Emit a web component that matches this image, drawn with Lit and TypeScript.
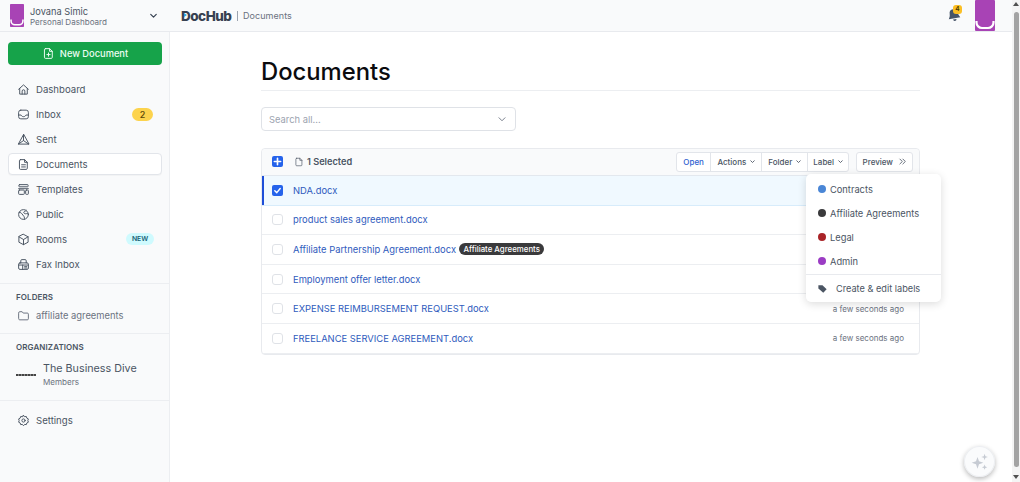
import { LitElement, html, css, svg } from "lit";
import { customElement } from "lit/decorators.js";

const ic = (p: unknown, size = 14, sw = 1.8) => html`<svg class="ic" width=${size} height=${size} viewBox="0 0 24 24" fill="none" stroke="currentColor" stroke-width=${sw} stroke-linecap="round" stroke-linejoin="round">${p}</svg>`;

const icons = {
  home: svg`<path d="M3 11.500 12 3.500l9 8"/><path d="M5 10v10.500h14V10"/><path d="M9.500 20.500V15a2.500 2.500 0 0 1 5 0v5.500"/>`,
  inbox: svg`<rect x="3" y="4" width="18" height="16" rx="4"/><path d="M3 13h4.500c1 2 2.500 3 4.500 3s3.500-1 4.500-3H21"/>`,
  sent: svg`<path d="M12 3 2.500 20.500h19z"/><path d="M12 3v11M2.500 20.500 12 14l9.500 6.500"/>`,
  doc: svg`<path d="M6.500 3h7.500l5 5v11a2 2 0 0 1-2 2H6.500a2 2 0 0 1-2-2V5a2 2 0 0 1 2-2z"/><path d="M14 3v5h5"/><path d="M8.500 12.500h7M8.500 16.500h7"/>`,
  templates: svg`<rect x="3.500" y="3" width="17" height="4" rx="1"/><path d="M3 10.500h18"/><rect x="3" y="13" width="10.500" height="8" rx="1.500"/><rect x="16" y="13" width="5" height="8" rx="1.500"/>`,
  globe: svg`<circle cx="12" cy="12" r="9"/><path d="M4 8c3 0 4 1.500 5.500 3s1 3 2.500 3.500 2 3 1.500 6.500"/><path d="M17 4.500c-1.500 2-4 1.500-4.500 3.500s3 3 4.500 2.500 3-.5 4 .5"/>`,
  box: svg`<path d="M12 2.500 20.500 7v10L12 21.500 3.500 17V7z"/><path d="M3.500 7 12 12l8.500-5M12 12v9.500"/>`,
  fax: svg`<path d="M7 9V5a2 2 0 0 1 2-2h6a2 2 0 0 1 2 2v4"/><rect x="3" y="9" width="18" height="12" rx="2.500"/><path d="M3 13h18M14 16h4M14 18.500h4M10.500 13v8"/>`,
  folder: svg`<path d="M3 7a2 2 0 0 1 2-2h4.500l2 2.500H19a2 2 0 0 1 2 2V18a2 2 0 0 1-2 2H5a2 2 0 0 1-2-2z"/>`,
  gear: svg`<circle cx="12" cy="12" r="3"/><path d="M12 2.500l2 2.500 3.200-.4.9 3 2.900 1.500-1 3 1 3-2.900 1.500-.9 3-3.200-.4-2 2.500-2-2.500-3.200.4-.9-3L3 15.100l1-3-1-3 2.900-1.500.9-3 3.200.4z"/>`,
  newDoc: svg`<path d="M6.500 3h7.500l5 5v11a2 2 0 0 1-2 2H6.500a2 2 0 0 1-2-2V5a2 2 0 0 1 2-2z"/><path d="M14 3v5h5"/><path d="M12 11v6M9 14h6"/>`,
  plainDoc: svg`<path d="M6.500 3h7.500l5 5v11a2 2 0 0 1-2 2H6.500a2 2 0 0 1-2-2V5a2 2 0 0 1 2-2z"/><path d="M14 3v5h5"/>`,
  chev: svg`<path d="M6 9.500l6 6 6-6"/>`,
  dbl: svg`<path d="M5 5.500l6.500 6.500L5 18.500M13 5.500l6.500 6.500-6.500 6.500"/>`,
};

const Avatar = (w: number, h: number) => html`<svg width=${w} height=${h} viewBox="0 0 20 31" preserveAspectRatio="none" class="avatar">
  <rect width="20" height="31" rx="1" fill="#a843b5"/>
  <path d="M1.500 21v1.500a5.500 5.500 0 0 0 5.500 5.500h6a5.500 5.500 0 0 0 5.500-5.500V21" fill="none" stroke="#fff" stroke-width="2.200"/>
</svg>`;

@customElement("app-root")
export class AppRoot extends LitElement {
  static styles = css`
    :host { display: block; width: 1020px; height: 482px; overflow: hidden; font-family: Inter, "Liberation Sans", sans-serif; color: #4b5563; background: #fff; position: relative; }
    * { box-sizing: border-box; }
    .ic { flex: none; display: block; }
    .page { display: flex; height: 482px; }
    .app { flex: 1; display: flex; flex-direction: column; min-width: 0; }
    .scroll { width: 8px; background: #f4f4f4; flex: none; display: flex; flex-direction: column; align-items: center; justify-content: space-between; padding: 2px 0 3px; }
    .arrow-up { width: 0; height: 0; border: 3.500px solid transparent; border-top: 0; border-bottom: 4px solid #505050; }
    .arrow-down { width: 0; height: 0; border: 3.500px solid transparent; border-bottom: 0; border-top: 4px solid #505050; }
    .thumb { flex: 1; width: 5px; margin: 4px 0 6px; background: #a3a3a3; border-radius: 3px; max-height: 455px; }
    header { height: 32px; flex: none; display: flex; align-items: stretch; background: #f9fafb; border-bottom: 1px solid #e8eaee; }
    .user { width: 170px; flex: none; display: flex; align-items: center; padding: 0 11px 0 10px; gap: 6px; }
    .avatar { display: block; flex: none; }
    .user .who { flex: 1; padding-top: 1px; }
    .who b { display: block; font-weight: 400; font-size: 9.250px; color: #4b5563; line-height: 11px; }
    .who span { display: block; font-size: 8.050px; color: #6b7280; line-height: 10px; }
    .user .ic { color: #374151; }
    .brand { flex: 1; display: flex; align-items: center; padding-left: 11px; gap: 5px; }
    .logo { font-weight: 800; font-size: 13.500px; color: #374151; letter-spacing: -0.5px; position: relative; width: 51px; }
    .logo i { position: absolute; left: 3px; top: 5px; width: 0; height: 0; border: 2.500px solid transparent; border-left: 3.500px solid #2aa6e0; border-right: 0; }
    .sep { width: 1px; height: 10px; background: #9ca3af; }
    .crumb { font-size: 9px; color: #6b7280; letter-spacing: 0.05px; }
    .right { display: flex; align-items: flex-start; padding-right: 17px; }
    .bell { position: relative; width: 14px; height: 14px; margin: 8px 14px 0 0; color: #475569; }
    .bell svg { display: block; transform: rotate(-10deg); }
    .bell b { position: absolute; left: 6px; top: -3px; width: 9px; height: 9px; border-radius: 3px; background: #fbbf24; color: #4b3b00; font-size: 6.500px; font-weight: 600; text-align: center; line-height: 9px; }
    .body { flex: 1; display: flex; min-height: 0; }
    aside { width: 170px; flex: none; background: #f9fafb; border-right: 1px solid #eceef1; padding-top: 10px; display: flex; flex-direction: column; }
    .new { margin: 0 7px 0 8px; height: 23px; border-radius: 4px; background: #16a34a; color: #ecfdf3; display: flex; align-items: center; justify-content: center; gap: 5px; font-size: 9.300px; font-weight: 500; }
    nav { padding: 13px 7px 0 8px; display: flex; flex-direction: column; gap: 3px; }
    .item { height: 22px; display: flex; align-items: center; padding-left: 8px; gap: 6px; font-size: 9.600px; color: #4b5563; border: 1px solid transparent; border-radius: 4px; }
    .item .ic { color: #4b5563; }
    .item.active { background: #fff; border-color: #e2e5ea; box-shadow: 0 1px 1px rgba(0,0,0,.03); }
    .item span.t { flex: 1; }
    .count { width: 21px; height: 13px; border-radius: 7px; background: #fcd34d; color: #5c4708; font-size: 9px; font-weight: 500; text-align: center; line-height: 13px; margin-right: 8px; }
    .tagnew { width: 28px; height: 12px; border-radius: 6px; background: #cffafe; color: #155e75; font-size: 6.800px; font-weight: 600; text-align: center; line-height: 12px; margin-right: 7px; }
    .sect { border-top: 1px solid #eceef1; padding: 0 16px; }
    .sect h4 { margin: 0; font-size: 8px; font-weight: 600; color: #4b5563; letter-spacing: .1px; line-height: 10px; }
    .folders { margin-top: 8px; padding-top: 8px; height: 50px; }
    .frow { display: flex; align-items: center; gap: 6px; margin-top: 7px; padding-left: 1px; font-size: 9.400px; color: #6b7280; }
    .orgs { padding-top: 8px; height: 67px; }
    .org { display: flex; align-items: center; gap: 7px; margin-top: 10px; }
    .orglogo { width: 20px; height: 2px; background: repeating-linear-gradient(90deg,#444 0 2px,#888 2px 3px); flex: none; }
    .org b { display: block; font-weight: 400; font-size: 10.750px; color: #4b5563; line-height: 14px; }
    .org span { display: block; font-size: 8.100px; color: #6b7280; line-height: 11px; margin-top: .5px; }
    .setting { border-top: 1px solid #eceef1; padding: 8px 7px 0 8px; }
    main { flex: 1; padding: 0 92px 0 91px; min-width: 0; position: relative; }
    h1 { margin: 0; padding-top: 25px; height: 59px; font-size: 23.800px; font-weight: 500; color: #0b0b0f; line-height: 30px; border-bottom: 1px solid #eceef1; }
    .search { margin-top: 16px; width: 255px; height: 24px; border: 1px solid #dfe2e7; border-radius: 4px; display: flex; align-items: center; justify-content: space-between; padding: 0 7px; font-size: 9.400px; color: #9ca3af; }
    .search .ic { color: #6b7280; }
    .table { margin-top: 17px; border: 1px solid #e8eaee; border-radius: 4px; position: relative; }
    .tool { height: 27px; display: flex; align-items: center; background: #f9fafb; padding: 0 6px 1px 10px; border-radius: 4px 4px 0 0; border-bottom: 1px solid #e3e8ee; }
    .box { width: 11px; height: 11px; border-radius: 2px; background: #2563eb; flex: none; display: flex; align-items: center; justify-content: center; }
    .empty { background: #fff; border: 1px solid #dfe2e7; border-radius: 3px; }
    .sel { display: flex; align-items: center; gap: 2px; margin-left: 11px; font-size: 9.200px; font-weight: 600; color: #4b5563; flex: 1; }
    .sel .ic { margin-right: 1px; }
    .group { display: flex; height: 20px; background: #fff; border: 1px solid #e2e5ea; border-radius: 3px; }
    .btn { display: flex; align-items: center; gap: 3px; padding: 0 4.500px 0 6.500px; font-size: 8px; font-weight: 500; color: #4b5563; border-left: 1px solid #e2e5ea; }
    .btn:first-child { border-left: 0; }
    .btn.open { color: #2f5fd0; padding: 0 6px; }
    .btn.lbl { padding: 0 3.500px 0 5.500px; }
    .group.preview { margin-left: 7px; }
    .group.preview .btn { padding: 0 5px 0 6px; gap: 5px; }
    .row { height: 29.600px; display: flex; align-items: center; padding-left: 10px; border-bottom: 1px solid #eceef1; font-size: 9.400px; color: #2f5bbd; }
    .row:last-child { border-bottom: 0; }
    .row.on { background: #f0f9ff; box-shadow: inset 2px 0 0 #1d4ed8; border-bottom-color: #d7ecfb; }
    .row .name { margin-left: 10px; }
    .row .when { margin-left: auto; margin-right: 15px; font-size: 8px; color: #6b7280; }
    .pill { margin-left: 3px; height: 12px; border-radius: 6px; background: #3a3a3c; color: #fff; font-size: 7.850px; font-weight: 500; padding: 0 4.500px; line-height: 12px; }
    .menu { position: absolute; left: 544px; top: 25px; width: 135px; height: 128px; background: #fff; border-radius: 5px; box-shadow: 0 2px 8px rgba(0,0,0,.14); padding-top: 3px; color: #4b5563; }
    .mi { height: 24px; display: flex; align-items: center; gap: 4px; padding-left: 12px; font-size: 9.300px; }
    .dot { width: 8px; height: 8px; border-radius: 50%; flex: none; }
    .mdiv { border-top: 1px solid #e8eaee; margin-top: 1px; padding-top: 1px; }
    .mi.create { gap: 9px; font-size: 9.200px; }
    .fab { position: absolute; right: 17px; bottom: 5px; width: 31px; height: 31px; border-radius: 50%; background: #fafbfc; box-shadow: 0 2px 5px rgba(0,0,0,.28), inset 0 0 0 1px #eceef1; display: flex; align-items: center; justify-content: center; }
  `;

  render() {
    const nav: [string, unknown, unknown?, boolean?][] = [
      ["Dashboard", icons.home],
      ["Inbox", icons.inbox, html`<span class="count">2</span>`],
      ["Sent", icons.sent],
      ["Documents", icons.doc, null, true],
      ["Templates", icons.templates],
      ["Public", icons.globe],
      ["Rooms", icons.box, html`<span class="tagnew">NEW</span>`],
      ["Fax Inbox", icons.fax],
    ];
    const rows: [string, string, unknown?][] = [
      ["NDA.docx", ""],
      ["product sales agreement.docx", ""],
      ["Affiliate Partnership Agreement.docx", "", html`<span class="pill">Affiliate Agreements</span>`],
      ["Employment offer letter.docx", ""],
      ["EXPENSE REIMBURSEMENT REQUEST.docx", "a few seconds ago"],
      ["FREELANCE SERVICE AGREEMENT.docx", "a few seconds ago"],
    ];
    const labels: [string, string][] = [["Contracts", "#4a86d6"], ["Affiliate Agreements", "#3a3a3c"], ["Legal", "#a92428"], ["Admin", "#9b3cc4"]];
    return html`
      <div class="page">
        <div class="app">
          <header>
            <div class="user">
              ${Avatar(14, 23)}
              <div class="who"><b>Jovana Simic</b><span>Personal Dashboard</span></div>
              ${ic(icons.chev, 11, 2.6)}
            </div>
            <div class="brand">
              <span class="logo">DocHub<i></i></span>
              <span class="sep"></span>
              <span class="crumb">Documents</span>
            </div>
            <div class="right">
              <div class="bell">
                <svg width="14" height="14" viewBox="0 0 24 24" fill="currentColor"><path d="M12 2a7 7 0 0 0-7 7c0 5-2.500 7-3 8.500h20c-.5-1.500-3-3.500-3-8.500a7 7 0 0 0-7-7z"/><path d="M9 19.500a3 3 0 0 0 6 0z"/></svg>
                <b>4</b>
              </div>
              ${Avatar(20, 31)}
            </div>
          </header>
          <div class="body">
            <aside>
              <div class="new">${ic(icons.newDoc, 13, 1.8)}<span>New Document</span></div>
              <nav>
                ${nav.map(([t, i, extra, active]) => html`
                  <div class="item ${active ? "active" : ""}">${ic(i, 13)}<span class="t">${t}</span>${extra ?? ""}</div>`)}
              </nav>
              <div class="sect folders">
                <h4>FOLDERS</h4>
                <div class="frow">${ic(icons.folder, 13)}<span>affiliate agreements</span></div>
              </div>
              <div class="sect orgs">
                <h4>ORGANIZATIONS</h4>
                <div class="org"><div class="orglogo"></div><div><b>The Business Dive</b><span>Members</span></div></div>
              </div>
              <div class="setting"><div class="item">${ic(icons.gear, 13)}<span class="t">Settings</span></div></div>
            </aside>
            <main>
              <h1>Documents</h1>
              <div class="search"><span>Search all...</span>${ic(icons.chev, 12, 1.8)}</div>
              <div class="table">
                <div class="tool">
                  <span class="box"><svg width="9" height="9" viewBox="0 0 10 10" stroke="#fff" stroke-width="1.800" stroke-linecap="round"><path d="M5 1.500v7M1.500 5h7"/></svg></span>
                  <span class="sel">${ic(icons.plainDoc, 10, 1.6)}1 Selected</span>
                  <div class="group">
                    <span class="btn open">Open</span>
                    <span class="btn">Actions ${ic(icons.chev, 7, 3)}</span>
                    <span class="btn">Folder ${ic(icons.chev, 7, 3)}</span>
                    <span class="btn lbl">Label ${ic(icons.chev, 7, 3)}</span>
                  </div>
                  <div class="group preview"><span class="btn">Preview ${ic(icons.dbl, 9, 2.2)}</span></div>
                </div>
                ${rows.map(([n, w, extra], idx) => html`
                  <div class="row ${idx === 0 ? "on" : ""}">
                    ${idx === 0
                      ? html`<span class="box"><svg width="9" height="9" viewBox="0 0 10 10" fill="none" stroke="#fff" stroke-width="1.600" stroke-linecap="round" stroke-linejoin="round"><path d="M2 5.200 4.200 7.400 8 2.800"/></svg></span>`
                      : html`<span class="box empty"></span>`}
                    <span class="name">${n}</span>${extra ?? ""}
                    ${w ? html`<span class="when">${w}</span>` : ""}
                  </div>`)}
                <div class="menu">
                  ${labels.map(([l, c]) => html`<div class="mi"><span class="dot" style="background:${c}"></span>${l}</div>`)}
                  <div class="mdiv">
                    <div class="mi create">
                      <svg width="9" height="9" viewBox="0 0 24 24" fill="#4b5563" class="ic"><path d="M1 3h11l11 11-9 9L1 12z"/></svg>
                      Create &amp; edit labels
                    </div>
                  </div>
                </div>
              </div>
              <div class="fab">
                <svg width="20" height="20" viewBox="0 0 24 24" fill="#c6cbd3"><path d="M9 6l1.800 5.200L16 13l-5.200 1.800L9 20l-1.800-5.200L2 13l5.200-1.800z"/><path d="M17.500 2l1 3 3 1-3 1-1 3-1-3-3-1 3-1z"/><path d="M17.500 15l.9 2.300 2.300.9-2.300.9-.9 2.300-.9-2.300-2.300-.9 2.300-.9z"/></svg>
              </div>
            </main>
          </div>
        </div>
        <div class="scroll"><span class="arrow-up"></span><span class="thumb"></span><span class="arrow-down"></span></div>
      </div>
    `;
  }
}
